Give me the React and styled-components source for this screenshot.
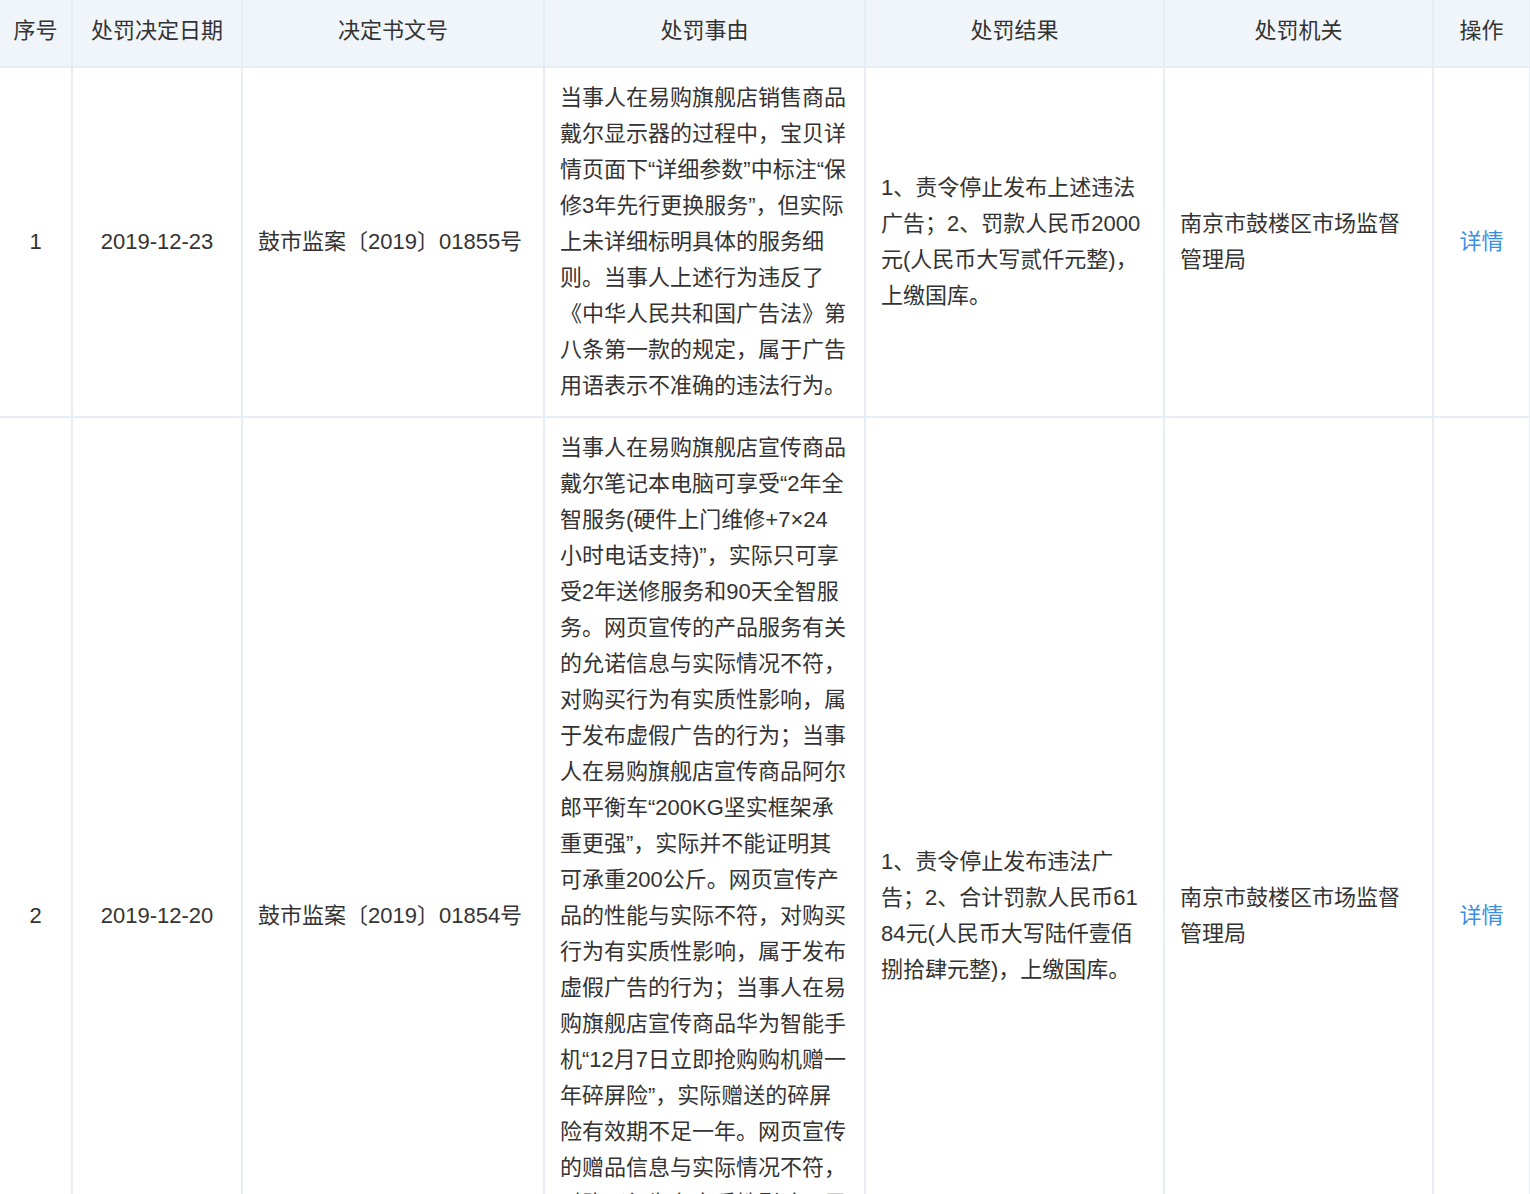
import React from "react";
import styled, { createGlobalStyle } from "styled-components";

const Global = createGlobalStyle`
  body { margin: 0; background: #fff; font-family: "Liberation Sans", "Noto Sans CJK SC", sans-serif; }
`;

const Table = styled.table`
  width: 1530px;
  table-layout: fixed;
  border-collapse: collapse;
  color: #333;
  font-size: 22px;
  line-height: 36px;
`;

const Th = styled.th`
  height: 62px;
  background: #f0f5fa;
  font-weight: normal;
  text-align: center;
  border: 2px solid #e6edf5;
  border-top: none;
  padding: 0 8px 4px;
  white-space: nowrap;
  &:first-child { border-left: none; }
`;

const Td = styled.td`
  border: 2px solid #e6edf5;
  padding: 12px 15px;
  vertical-align: middle;
  text-align: ${(p) => (p.$center ? "center" : "left")};
  word-break: break-all;
  &:first-child { border-left: none; }
`;

const Link = styled.a`
  color: #3a8ee6;
  text-decoration: none;
`;

const rows = [
  {
    no: 1,
    date: "2019-12-23",
    doc: "鼓市监案〔2019〕01855号",
    reason:
      "当事人在易购旗舰店销售商品戴尔显示器的过程中，宝贝详情页面下“详细参数”中标注“保修3年先行更换服务”，但实际上未详细标明具体的服务细则。当事人上述行为违反了《中华人民共和国广告法》第八条第一款的规定，属于广告用语表示不准确的违法行为。",
    result: "1、责令停止发布上述违法广告；2、罚款人民币2000元(人民币大写贰仟元整)，上缴国库。",
  },
  {
    no: 2,
    date: "2019-12-20",
    doc: "鼓市监案〔2019〕01854号",
    reason:
      "当事人在易购旗舰店宣传商品戴尔笔记本电脑可享受“2年全智服务(硬件上门维修+7×24小时电话支持)”，实际只可享受2年送修服务和90天全智服务。网页宣传的产品服务有关的允诺信息与实际情况不符，对购买行为有实质性影响，属于发布虚假广告的行为；当事人在易购旗舰店宣传商品阿尔郎平衡车“200KG坚实框架承重更强”，实际并不能证明其可承重200公斤。网页宣传产品的性能与实际不符，对购买行为有实质性影响，属于发布虚假广告的行为；当事人在易购旗舰店宣传商品华为智能手机“12月7日立即抢购购机赠一年碎屏险”，实际赠送的碎屏险有效期不足一年。网页宣传的赠品信息与实际情况不符，对购买行为有实质性影响，属于发布虚假广告的行为。当事人上述行为违反了《中华人民共和国广告法》第二十八条的规定，构成发布虚假广告的违法行为。",
    result: "1、责令停止发布违法广告；2、合计罚款人民币6184元(人民币大写陆仟壹佰捌拾肆元整)，上缴国库。",
  },
];

export default function App() {
  return (
    <>
      <Global />
      <Table>
        <colgroup>
          <col style={{ width: 72 }} />
          <col style={{ width: 170 }} />
          <col style={{ width: 302 }} />
          <col style={{ width: 321 }} />
          <col style={{ width: 299 }} />
          <col style={{ width: 269 }} />
          <col style={{ width: 97 }} />
        </colgroup>
        <thead>
          <tr>
            <Th>序号</Th>
            <Th>处罚决定日期</Th>
            <Th>决定书文号</Th>
            <Th>处罚事由</Th>
            <Th>处罚结果</Th>
            <Th>处罚机关</Th>
            <Th>操作</Th>
          </tr>
        </thead>
        <tbody>
          {rows.map((r) => (
            <tr key={r.no}>
              <Td $center>{r.no}</Td>
              <Td $center>{r.date}</Td>
              <Td>{r.doc}</Td>
              <Td>{r.reason}</Td>
              <Td>{r.result}</Td>
              <Td>南京市鼓楼区市场监督管理局</Td>
              <Td $center><Link href="#1">详情</Link></Td>
            </tr>
          ))}
        </tbody>
      </Table>
    </>
  );
}
